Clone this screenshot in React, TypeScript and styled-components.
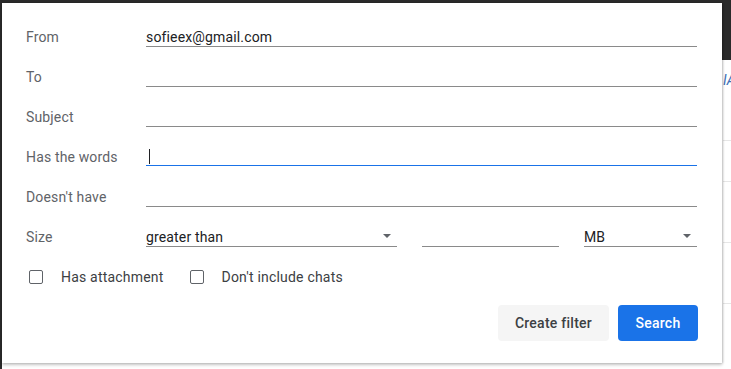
import React from "react";
import styled, { createGlobalStyle } from "styled-components";

const Global = createGlobalStyle`
  html, body { margin: 0; padding: 0; }
  body { width: 731px; height: 369px; overflow: hidden; font-family: Roboto, "Liberation Sans", Arial, sans-serif; }
`;

const Stage = styled.div`
  position: relative;
  width: 731px;
  height: 369px;
  background: #2a2a2a;
  display: flex;
  flex-direction: column;
`;

const HeaderBar = styled.div`
  height: 60px;
  flex: none;
`;

const MainArea = styled.div`
  flex: 1;
  margin-left: 2px;
  background: #ffffff;
  display: flex;
  flex-direction: column;
  align-items: flex-end;
`;

const PeekText = styled.div`
  margin-top: 12px;
  width: 8px;
  overflow: hidden;
  font-size: 14px;
  font-style: italic;
  color: #3b6fb6;
  line-height: 16px;
  white-space: nowrap;
`;

const PeekLine = styled.div<{ $top: number }>`
  margin-top: ${(p) => p.$top}px;
  width: 8px;
  height: 1px;
  background: #e6e6e6;
`;

const Panel = styled.div`
  position: absolute;
  left: 2px;
  top: 3px;
  width: 720px;
  height: 360px;
  box-sizing: border-box;
  background: #fff;
  box-shadow: 0 2px 3px rgba(0, 0, 0, 0.22), 1px 0 2px rgba(0, 0, 0, 0.18);
  padding: 4px 25px 22px 24px;
  display: flex;
  flex-direction: column;
`;

const Row = styled.div`
  display: flex;
  align-items: flex-end;
  height: 40px;
`;

const Label = styled.div`
  width: 120px;
  flex: none;
  font-size: 14px;
  letter-spacing: 0.15px;
  color: #5f6368;
  line-height: 20px;
  height: 20px;
`;

const Field = styled.div<{ $focus?: boolean; $w?: number }>`
  ${(p) => (p.$w ? `width: ${p.$w}px; flex: none;` : "flex: 1;")}
  height: 20px;
  border-bottom: 1px solid ${(p) => (p.$focus ? "#1a73e8" : "#8a8a8a")};
  font-size: 14px;
  letter-spacing: 0.15px;
  color: #202124;
  line-height: 20px;
  display: flex;
  align-items: center;
  justify-content: space-between;
  box-sizing: content-box;
  ${(p) => (p.$focus ? "margin-bottom: 1px; height: 19px;" : "")}
`;

const FieldText = styled.span`
  transform: translateY(1px);
`;

const Caret = styled.span`
  display: inline-block;
  width: 1px;
  height: 15px;
  background: #202124;
  margin-left: 3px;
  margin-top: 2px;
`;

const Arrow = styled.span`
  width: 0;
  height: 0;
  border-left: 4px solid transparent;
  border-right: 4px solid transparent;
  border-top: 4px solid #5f6368;
  margin-right: 6px;
`;

const Gap = styled.div`
  width: 25px;
  flex: none;
`;

const CheckRow = styled.div`
  display: flex;
  align-items: center;
  height: 20px;
  margin-top: 20px;
  padding-left: 3px;
`;

const Check = styled.span`
  width: 12px;
  height: 12px;
  border: 1.5px solid #5f6368;
  border-radius: 2px;
  flex: none;
`;

const CheckLabel = styled.span<{ $mr?: number }>`
  font-size: 14px;
  letter-spacing: 0.2px;
  color: #3c4043;
  margin-left: 18px;
  margin-right: ${(p) => p.$mr ?? 0}px;
`;

const Actions = styled.div`
  margin-top: auto;
  margin-right: -1px;
  display: flex;
  justify-content: flex-end;
  gap: 9px;
`;

const Button = styled.button<{ $primary?: boolean }>`
  height: 36px;
  border: none;
  border-radius: 4px;
  padding: 0 ${(p) => (p.$primary ? 16 : 17)}px;
  font-family: Roboto, "Liberation Sans", Arial, sans-serif;
  font-size: 14px;
  font-weight: 500;
  letter-spacing: 0.25px;
  background: ${(p) => (p.$primary ? "#1a73e8" : "#f5f5f5")};
  color: ${(p) => (p.$primary ? "#ffffff" : "#3c4043")};
  min-width: ${(p) => (p.$primary ? 80 : 110)}px;
`;

const rows: { label: string; value?: string; focus?: boolean }[] = [
  { label: "From", value: "sofieex@gmail.com" },
  { label: "To" },
  { label: "Subject" },
  { label: "Has the words", focus: true },
  { label: "Doesn't have" },
];

export default function App() {
  return (
    <>
      <Global />
      <Stage>
        <HeaderBar />
        <MainArea>
          <PeekText>IA</PeekText>
          <PeekLine $top={52} />
          <PeekLine $top={40} />
          <PeekLine $top={60} />
          <PeekLine $top={60} />
        </MainArea>
        <Panel>
          {rows.map((r) => (
            <Row key={r.label}>
              <Label>
                <FieldText>{r.label}</FieldText>
              </Label>
              <Field $focus={r.focus}>
                {r.value ? <FieldText>{r.value}</FieldText> : r.focus ? <Caret /> : null}
              </Field>
            </Row>
          ))}
          <Row>
            <Label>
              <FieldText>Size</FieldText>
            </Label>
            <Field $w={251}>
              <FieldText>greater than</FieldText>
              <Arrow />
            </Field>
            <Gap />
            <Field $w={137} />
            <Gap />
            <Field $w={113}>
              <FieldText>MB</FieldText>
              <Arrow />
            </Field>
          </Row>
          <CheckRow>
            <Check />
            <CheckLabel $mr={26}>Has attachment</CheckLabel>
            <Check />
            <CheckLabel>Don't include chats</CheckLabel>
          </CheckRow>
          <Actions>
            <Button>Create filter</Button>
            <Button $primary>Search</Button>
          </Actions>
        </Panel>
      </Stage>
    </>
  );
}
